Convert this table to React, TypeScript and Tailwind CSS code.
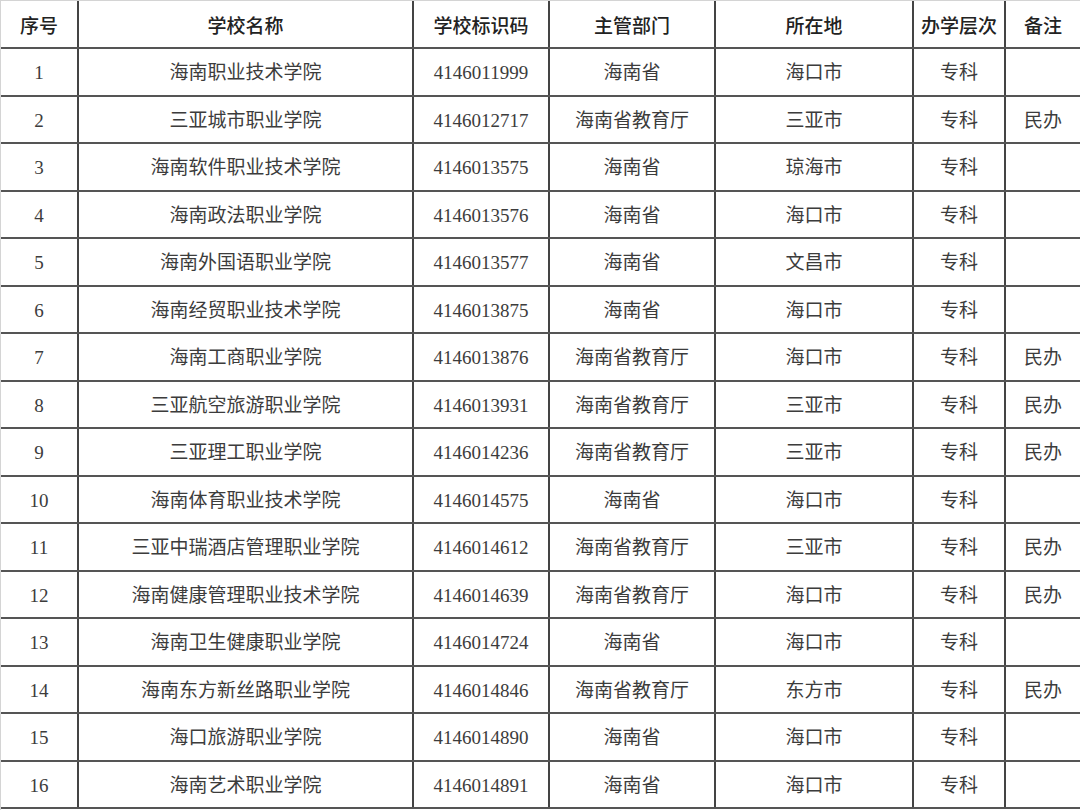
import React from 'react';

const rows = [
  ['1', '海南职业技术学院', '4146011999', '海南省', '海口市', '专科', ''],
  ['2', '三亚城市职业学院', '4146012717', '海南省教育厅', '三亚市', '专科', '民办'],
  ['3', '海南软件职业技术学院', '4146013575', '海南省', '琼海市', '专科', ''],
  ['4', '海南政法职业学院', '4146013576', '海南省', '海口市', '专科', ''],
  ['5', '海南外国语职业学院', '4146013577', '海南省', '文昌市', '专科', ''],
  ['6', '海南经贸职业技术学院', '4146013875', '海南省', '海口市', '专科', ''],
  ['7', '海南工商职业学院', '4146013876', '海南省教育厅', '海口市', '专科', '民办'],
  ['8', '三亚航空旅游职业学院', '4146013931', '海南省教育厅', '三亚市', '专科', '民办'],
  ['9', '三亚理工职业学院', '4146014236', '海南省教育厅', '三亚市', '专科', '民办'],
  ['10', '海南体育职业技术学院', '4146014575', '海南省', '海口市', '专科', ''],
  ['11', '三亚中瑞酒店管理职业学院', '4146014612', '海南省教育厅', '三亚市', '专科', '民办'],
  ['12', '海南健康管理职业技术学院', '4146014639', '海南省教育厅', '海口市', '专科', '民办'],
  ['13', '海南卫生健康职业学院', '4146014724', '海南省', '海口市', '专科', ''],
  ['14', '海南东方新丝路职业学院', '4146014846', '海南省教育厅', '东方市', '专科', '民办'],
  ['15', '海口旅游职业学院', '4146014890', '海南省', '海口市', '专科', ''],
  ['16', '海南艺术职业学院', '4146014891', '海南省', '海口市', '专科', ''],
];

const headers = ['序号', '学校名称', '学校标识码', '主管部门', '所在地', '办学层次', '备注'];
const widths = ['w-[77px]', 'w-[335px]', 'w-[136px]', 'w-[166px]', 'w-[198px]', 'w-[92px]', 'w-[76px]'];

const App: React.FC = () => {
  return (
    <div className="w-[1080px] h-[810px] bg-white overflow-hidden border-t border-l border-t-[#d4d4d4] border-l-[#d4d4d4]">
      <table
        className="table-fixed border-collapse w-[1079px] text-[19px] text-[#3c3c3c]"
        style={{ fontFamily: '"Liberation Serif", "Noto Sans CJK SC", serif' }}
      >
        <colgroup>
          {widths.map((w, i) => (
            <col key={i} className={w} />
          ))}
        </colgroup>
        <thead>
          <tr className="h-[47px]">
            {headers.map((h, i) => (
              <th
                key={h}
                className={`pt-[3px] font-medium text-[#222] text-center border-b-2 border-b-[#555] ${i > 0 ? 'border-l-2 border-l-[#444]' : ''} ${i === headers.length - 1 ? 'border-r-2 border-r-[#333]' : ''}`}
                style={{ fontFamily: '"Noto Sans CJK SC", "Noto Sans", sans-serif' }}
              >
                {h}
              </th>
            ))}
          </tr>
        </thead>
        <tbody>
          {rows.map((r) => (
            <tr key={r[0]} className="h-[47.5px]">
              {r.map((c, i) => (
                <td
                  key={i}
                  className={`pt-[3px] text-center font-normal border-b-2 border-b-[#555] ${i > 0 ? 'border-l-2 border-l-[#444]' : ''} ${i === r.length - 1 ? 'border-r-2 border-r-[#333]' : ''}`}
                >
                  {c}
                </td>
              ))}
            </tr>
          ))}
        </tbody>
      </table>
    </div>
  );
};

export default App;
